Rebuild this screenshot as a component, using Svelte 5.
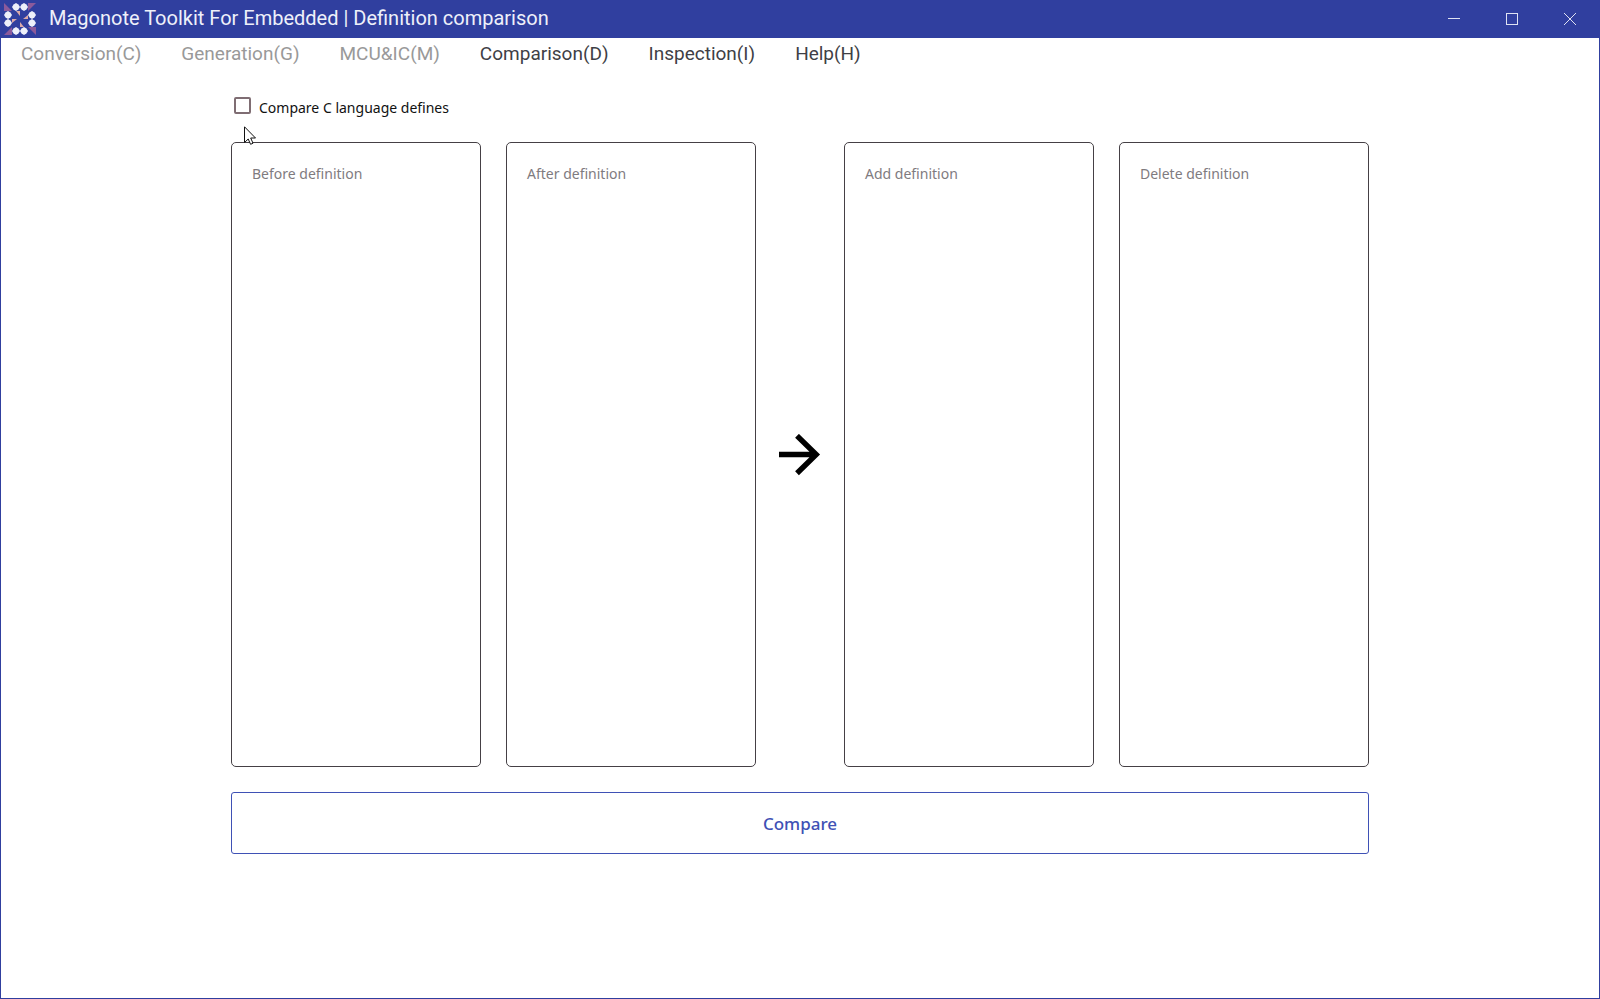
<script>
  const menus = [
    { label: 'Conversion(C)', disabled: true },
    { label: 'Generation(G)', disabled: true },
    { label: 'MCU&IC(M)', disabled: true },
    { label: 'Comparison(D)', disabled: false },
    { label: 'Inspection(I)', disabled: false },
    { label: 'Help(H)', disabled: false }
  ];
  const diamonds = [[12, 4], [20, 4], [4, 12], [4, 20], [28, 12], [28, 20], [12, 28], [20, 28]];

  let compareDefines = $state(false);
  let before = $state('');
  let after = $state('');
  let added = $state('');
  let deleted = $state('');

  function names(text) {
    return text
      .split('\n')
      .map((line) => (compareDefines ? line.replace(/^\s*#define\s+/, '') : line).trim())
      .filter(Boolean);
  }

  function compare() {
    const a = names(before);
    const b = names(after);
    added = b.filter((n) => !a.includes(n)).join('\n');
    deleted = a.filter((n) => !b.includes(n)).join('\n');
  }
</script>

<div class="window">
  <header class="titlebar">
    <svg class="logo" viewBox="0 0 32 32" aria-hidden="true">
      <g fill="#8b5a9b">
        <path d="M0 0V8H8Z" />
        <path d="M32 0H24V8Z" />
        <path d="M32 32V24H24Z" />
        <path d="M0 32H8V24Z" />
      </g>
      <g fill="#dba9a8">
        <path d="M12 8H16V13Z" />
        <path d="M24 12V16H19Z" />
        <path d="M20 24H16V19Z" />
        <path d="M8 20V16H13Z" />
      </g>
      <g fill="#eef0fa">
        {#each diamonds as [x, y]}
          <path transform="translate({x} {y})" d="M-4 0L-2.4 -2.4L0 -4L2.4 -2.4L4 0L2.4 2.4L0 4L-2.4 2.4Z" />
        {/each}
      </g>
    </svg>
    <h1>Magonote Toolkit For Embedded | Definition comparison</h1>
    <div class="controls">
      <button aria-label="Minimize">
        <svg viewBox="0 0 12 12" shape-rendering="crispEdges"><path d="M0 5.5H12" /></svg>
      </button>
      <button aria-label="Maximize">
        <svg viewBox="0 0 12 12" shape-rendering="crispEdges"><path d="M.5 .5H11.5V11.5H.5Z" /></svg>
      </button>
      <button aria-label="Close">
        <svg viewBox="0 0 12 12"><path d="M0 0L12 12M12 0L0 12" /></svg>
      </button>
    </div>
  </header>

  <nav>
    {#each menus as menu}
      <button disabled={menu.disabled}>{menu.label}</button>
    {/each}
  </nav>

  <main>
    <label class="check">
      <input type="checkbox" bind:checked={compareDefines} />
      <span>Compare C language defines</span>
    </label>

    <div class="panels">
      <div class="pair">
        <textarea aria-label="Before definition" placeholder="Before definition" bind:value={before}></textarea>
        <textarea aria-label="After definition" placeholder="After definition" bind:value={after}></textarea>
      </div>
      <svg class="arrow" viewBox="0 0 42 42" aria-hidden="true">
        <path d="M0 20.5H37M18 1.8L37.2 20.5L18 39.2" fill="none" stroke="#000" stroke-width="5.4" />
      </svg>
      <div class="pair">
        <textarea aria-label="Add definition" placeholder="Add definition" readonly value={added}></textarea>
        <textarea aria-label="Delete definition" placeholder="Delete definition" readonly value={deleted}></textarea>
      </div>
    </div>

    <button class="compare" onclick={compare}>Compare</button>
  </main>

  <svg class="pointer" viewBox="0 0 12 19" aria-hidden="true">
    <path d="M.5 .8V16.5L4.2 13L6.6 18.3L9 17.2L6.7 12H11.5Z" fill="#fff" stroke="#111" />
  </svg>
</div>

<style>
  :global(body) {
    margin: 0;
  }
  .window {
    position: relative;
    box-sizing: border-box;
    min-height: 100vh;
    display: flex;
    flex-direction: column;
    border: 1px solid #303f9f;
    border-top: 0;
    background: #fff;
    font-family: "Noto Sans", sans-serif;
  }
  button {
    margin: 0;
    padding: 0;
    border: 0;
    background: none;
    font: inherit;
  }
  .titlebar {
    display: flex;
    align-items: center;
    height: 38px;
    padding-left: 3px;
    background: #303f9f;
    color: #eef0fa;
  }
  .logo {
    width: 32px;
    height: 32px;
  }
  h1 {
    flex: 1;
    margin: 0 0 2px 13px;
    font: 400 20px/24px Roboto, sans-serif;
    white-space: nowrap;
  }
  .controls {
    display: flex;
    height: 100%;
  }
  .controls button {
    display: flex;
    align-items: center;
    justify-content: center;
    width: 58px;
  }
  .controls svg {
    width: 12px;
    height: 12px;
    fill: none;
    stroke: #dfe2f2;
  }
  nav {
    display: flex;
    font: 400 19px/32px Roboto, sans-serif;
  }
  nav button {
    padding: 0 20px;
    color: #3f3f46;
  }
  nav button:disabled {
    color: #999;
  }
  main {
    flex: 1;
    display: flex;
    flex-direction: column;
    width: 100%;
    max-width: 1138px;
    margin: 0 auto;
    padding: 26px 0 144px;
  }
  .check {
    display: flex;
    align-items: center;
    align-self: flex-start;
    gap: 8px;
    height: 24px;
    margin: 0 0 22px 3px;
    font-size: 14px;
    line-height: 24px;
    color: #111;
  }
  .check input {
    appearance: none;
    box-sizing: border-box;
    width: 17px;
    height: 17px;
    margin: 0 0 6px;
    border: 2px solid #7f6d73;
    border-radius: 2px;
  }
  .check input:checked {
    background: #3f51b5;
  }
  .panels {
    flex: 1;
    display: flex;
    align-items: stretch;
    gap: 23px;
  }
  .pair {
    flex: 1;
    display: flex;
    gap: 25px;
  }
  textarea {
    flex: 1;
    min-width: 0;
    box-sizing: border-box;
    margin: 0;
    padding: 20px;
    border: 1px solid #454045;
    border-radius: 5px;
    outline: 0;
    background: #fff;
    resize: none;
    font: 14px/21px "Noto Sans", sans-serif;
    color: #111;
  }
  textarea::placeholder {
    color: #7f7b7f;
    opacity: 1;
  }
  .arrow {
    align-self: center;
    width: 42px;
    height: 42px;
  }
  .compare {
    height: 62px;
    margin-top: 25px;
    border: 1px solid #3f51b5;
    border-radius: 3px;
    font-size: 17px;
    font-weight: 500;
    color: #3f51b5;
  }
  .pointer {
    position: absolute;
    left: 243px;
    top: 126px;
    width: 12px;
    height: 19px;
  }
</style>
